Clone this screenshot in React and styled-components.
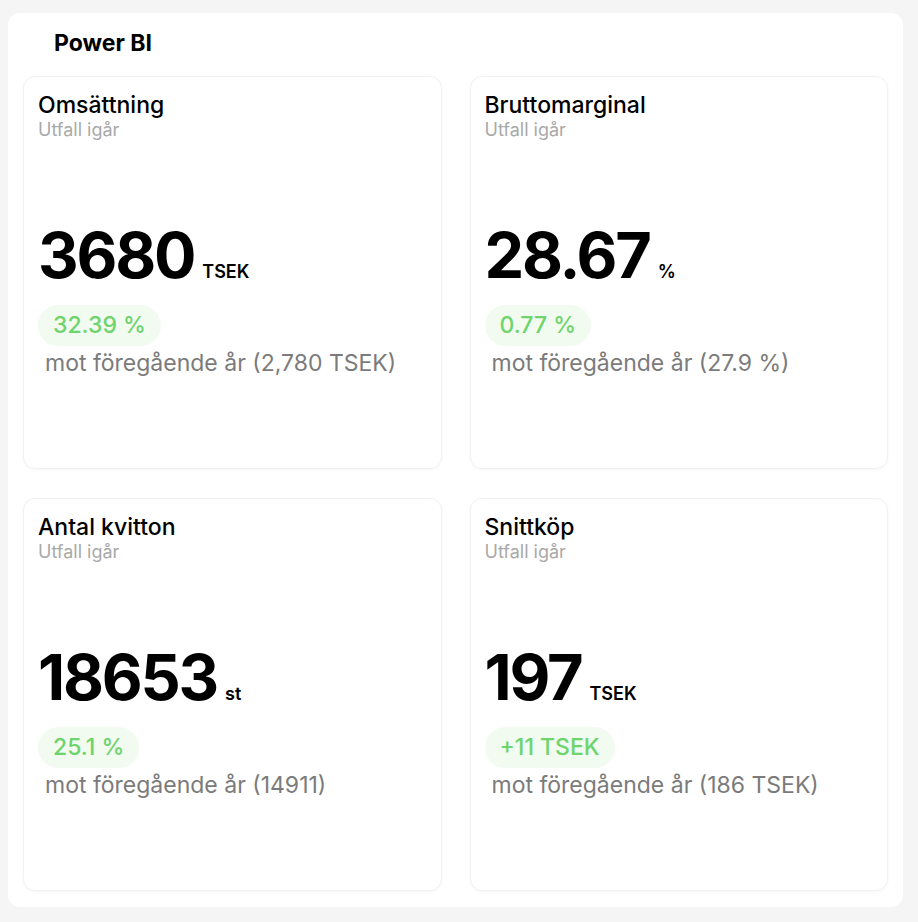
import React from 'react';
import styled, { createGlobalStyle } from 'styled-components';

const GlobalStyle = createGlobalStyle`
  body {
    margin: 0;
    background: #f5f5f5;
    font-family: Inter, "Noto Sans", sans-serif;
  }
`;

const kpis = [
  { title: "Omsättning", value: "3680", unit: "TSEK", change: "32.39 %", compare: "mot föregående år (2,780 TSEK)" },
  { title: "Bruttomarginal", value: "28.67", unit: "%", change: "0.77 %", compare: "mot föregående år (27.9 %)" },
  { title: "Antal kvitton", value: "18653", unit: "st", change: "25.1 %", compare: "mot föregående år (14911)" },
  { title: "Snittköp", value: "197", unit: "TSEK", change: "+11 TSEK", compare: "mot föregående år (186 TSEK)" },
];

const App = () => {
  return (
    <>
      <GlobalStyle />
      <Panel>
        <Heading>Power BI</Heading>
        <Grid>
          {kpis.map((k) => (
            <Card key={k.title}>
              <Title>{k.title}</Title>
              <Subtitle>Utfall igår</Subtitle>
              <ValueRow>
                <Value>{k.value}</Value>
                <Unit>{k.unit}</Unit>
              </ValueRow>
              <Pill>{k.change}</Pill>
              <Compare>{k.compare}</Compare>
            </Card>
          ))}
        </Grid>
      </Panel>
    </>
  );
};

const Panel = styled.div`
  margin: 13px 15px 15px 8px;
  background: #fff;
  border-radius: 12px;
  padding: 0 15px 16px 15px;
`;

const Heading = styled.h1`
  margin: 0;
  padding: 0 0 0 31px;
  height: 63px;
  line-height: 60px;
  font-size: 23px;
  font-weight: 700;
  color: #000;
`;

const Grid = styled.div`
  display: grid;
  grid-template-columns: 1fr 1fr;
  column-gap: 28px;
  row-gap: 29px;
`;

const Card = styled.div`
  height: 393px;
  box-sizing: border-box;
  border: 1px solid #f1f1f1;
  border-radius: 12px;
  box-shadow: 0 1px 3px rgba(0, 0, 0, 0.04);
  padding: 14px 14px;
  display: flex;
  flex-direction: column;
  align-items: flex-start;
`;

const Title = styled.div`
  font-size: 23px;
  font-weight: 500;
  line-height: 28px;
  color: #000;
`;

const Subtitle = styled.div`
  font-size: 18px;
  line-height: 22px;
  color: #a9a9a9;
`;

const ValueRow = styled.div`
  display: flex;
  align-items: baseline;
  gap: 8px;
  margin-top: 76px;
`;

const Value = styled.span`
  font-size: 63px;
  font-weight: 700;
  line-height: 76px;
  letter-spacing: -2.2px;
  color: #000;
`;

const Unit = styled.span`
  font-size: 18px;
  font-weight: 600;
  color: #000;
`;

const Pill = styled.div`
  margin-top: 12px;
  height: 41px;
  line-height: 41px;
  padding: 0 15px;
  border-radius: 21px;
  background: #f1fbf0;
  color: #6fd46d;
  font-size: 23px;
  font-weight: 500;
`;

const Compare = styled.div`
  margin-top: 3px;
  padding-left: 7px;
  font-size: 23px;
  line-height: 28px;
  color: #7b7b7b;
`;

export default App;
